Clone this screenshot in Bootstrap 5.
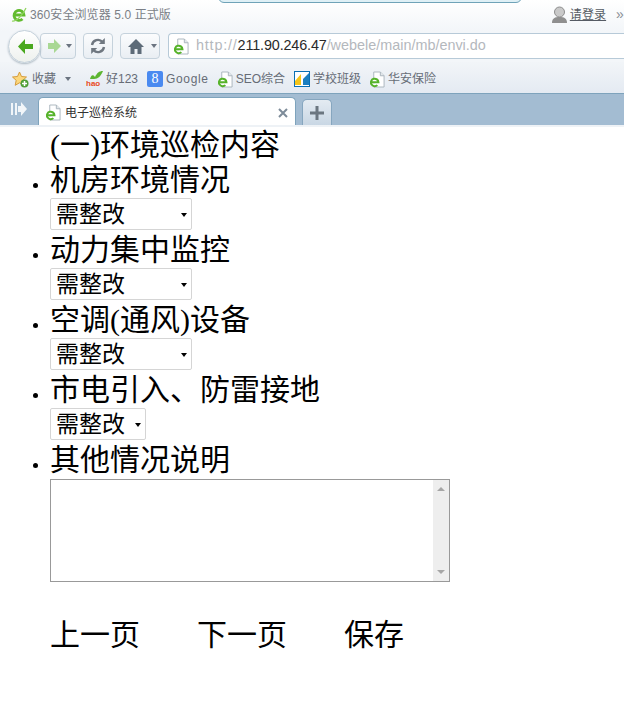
<!DOCTYPE html>
<html lang="zh-CN">

<head>
    <meta charset="UTF-8">
    <title>电子巡检系统</title>
    <link href="https://cdn.jsdelivr.net/npm/bootstrap@5.3.2/dist/css/bootstrap.min.css" rel="stylesheet">
    <style>
        html, body { height: 727px; overflow: hidden; background: #fff; }
        body { color: #000; font-family: "Liberation Serif", "Noto Sans CJK SC", serif; }

        /* browser chrome */
        .chrome { font-family: "Liberation Sans", "Noto Sans CJK SC", sans-serif; font-size: 12px; color: #666c76; position: relative; }
        .title-row { height: 31px; padding: 0 0 2px 11px; background: linear-gradient(#fff, #f3f6f9); gap: 3px; color: #7b7f86; letter-spacing: .1px; }
        .top-notch { position: absolute; left: 218px; top: -4px; width: 304px; height: 7px; background: #dff0f6; border: 1px solid #6fa3b8; border-radius: 0 0 6px 6px; }
        .login-link { color: #555b64; text-decoration: underline; margin-left: 3px; }
        .more-mark { margin: 0 0 0 10px; color: #8a8f96; font-size: 14px; }
        .addr-row { height: 31px; background: #f3f6f9; padding: 0 0 1px 7px; position: relative; }
        .tool-btn { height: 26px; border: 1px solid #c5d2dc; border-radius: 4px; background: linear-gradient(#fbfcfd, #e9eef3); }
        .back-circle { position: absolute; left: 8px; top: -1px; width: 33px; height: 33px; border-radius: 50%; background: linear-gradient(#fff, #eef1ee); border: 1px solid #c3d0da; box-shadow: 0 1px 2px #aab6c0; }
        .forward-btn { width: 36px; margin-left: 33px; padding-left: 7px; gap: 5px; }
        .reload-btn { width: 30px; margin-left: 7px; }
        .home-btn { width: 40px; margin-left: 7px; padding-left: 7px; gap: 7px; }
        .url-box { flex: 1; height: 26px; margin-left: 8px; padding-left: 5px; gap: 7px; background: #fff; border: 1px solid #b7cad8; border-right: 0; border-radius: 4px 0 0 4px; font-size: 14.4px; color: #b4b8bd; }
        .url-scheme { letter-spacing: .8px; }
        .url-host { color: #2a2a2a; letter-spacing: -.15px; }
        .caret-mini { width: 0; height: 0; border: 3px solid transparent; border-top: 4px solid #6b7480; border-bottom: 0; }
        .fav-row { height: 32px; padding: 3px 0 0 12px; background: linear-gradient(#f2f5f8, #e4eaf2); border-bottom: 1px solid #7ea3bc; font-size: 12px; }
        .fav-item { gap: 3px; margin-right: 9px; }
        .fav-caret { margin: 0 6px 0 6px; }
        .g-box { width: 16px; height: 16px; border-radius: 2px; background: #4a8af0; color: #fff; font: 14px/16px "Liberation Serif", serif; text-align: center; }
        .wide-latin { letter-spacing: .65px; }
        .tab-strip { height: 31px; background: #a3bcd2; padding-top: 3px; }
        .strip-side { width: 38px; height: 28px; border-radius: 0 0 6px 0; padding-left: 11px; padding-bottom: 5px; }
        .page-tab { width: 258px; height: 28px; background: #fff; border: 1px solid #7ea3bc; border-bottom: 0; border-radius: 5px 5px 0 0; padding: 2px 7px 0 7px; gap: 4px; color: #333; }
        .plus-tab { width: 30px; height: 26px; margin: 2px 0 0 6px; background: linear-gradient(#e4ebf2, #c9d7e4); border: 1px solid #86a6bf; border-bottom: 0; border-radius: 5px 5px 0 0; }
        .under-strip { height: 2px; background: #eef2f6; }

        /* page */
        .page-body { padding-left: 50px; font-size: 30px; line-height: 35px; }
        .form-list { list-style: disc; margin: 0; padding: 0; }
        .form-list li::marker { font-size: 17.5px; }
        .check-sel { height: 32px; margin: 1px 0 2px; border: 1px solid #d5d5d5; border-radius: 2px; background: #fff; font-size: 23px; line-height: 30px; padding: 1px 4px 0 5px; gap: 8px; white-space: nowrap; }
        .sel-wide { width: 142px; }
        .sel-narrow { width: 96px; }
        .sel-arrow { width: 0; height: 0; border: 3.5px solid transparent; border-top: 4px solid #000; border-bottom: 0; margin-left: auto; }
        .note-box { width: 400px; height: 103px; margin-top: 2px; border: 1px solid #999; }
        .note-bar { width: 16px; margin-left: auto; background: #eee; padding: 7px 0; }
        .bar-up { border: 4px solid transparent; border-bottom: 4px solid #a6a6a6; border-top: 0; }
        .bar-down { border: 4px solid transparent; border-top: 4px solid #a6a6a6; border-bottom: 0; }
        .page-actions { margin-top: 35px; gap: 57px; line-height: 35px; }
    </style>
    <script src="https://cdn.jsdelivr.net/npm/bootstrap@5.3.2/dist/js/bootstrap.bundle.min.js"></script>
</head>

<body>
    <svg width="0" height="0" class="d-none">
        <symbol id="ie-doc" viewBox="0 0 16 18">
            <path d="M4 1h7l4 4v12H4z" fill="#fff" stroke="#a9b4bc"/>
            <path d="M11 1v4h4" fill="#e4e8ec" stroke="#a9b4bc"/>
            <path d="M1.500 12h7.500a4 4 0 1 0-1.200 3" fill="#fff" stroke="#56b32a" stroke-width="2.200"/>
        </symbol>
    </svg>

    <div class="chrome">
        <div class="top-notch"></div>
        <div class="title-row d-flex align-items-center">
            <svg width="16" height="17" viewBox="0 0 16 17">
                <path d="M3 9h10a5 5 0 1 0-1.500 4" fill="#fff" stroke="#62bb2f" stroke-width="2.800"/>
                <path d="M1 15C5 16 12 9 15 2" fill="none" stroke="#8fd45c" stroke-width="1.200"/>
            </svg>
            <span>360安全浏览器 5.0 正式版</span>
            <div class="ms-auto d-flex align-items-center">
                <svg width="15" height="17" viewBox="0 0 15 17">
                    <circle cx="7.500" cy="6" r="5" fill="#c9c9c9" stroke="#8e8e8e"/>
                    <path d="M0 17c0-5 3-6 7.500-6s7.500 1 7.500 6z" fill="#8f8f8f"/>
                </svg>
                <span class="login-link">请登录</span>
                <span class="more-mark">»</span>
            </div>
        </div>

        <div class="addr-row d-flex align-items-center">
            <div class="back-circle d-flex align-items-center justify-content-center">
                <svg width="18" height="17" viewBox="0 0 18 17"><path d="M9 1 2 8.500l7 7.500V11h8V6H9z" fill="#4aa81f"/></svg>
            </div>
            <div class="tool-btn forward-btn d-flex align-items-center">
                <svg width="13" height="14" viewBox="0 0 13 14"><path d="M6 0l7 7-7 7v-4H0V4h6z" fill="#a9d894"/></svg>
                <span class="caret-mini"></span>
            </div>
            <div class="tool-btn reload-btn d-flex align-items-center justify-content-center">
                <svg width="18" height="18" viewBox="0 0 18 18" fill="none" stroke="#6f7780" stroke-width="2.400">
                    <path d="M3 8a6 6 0 0 1 10.500-3"/><path d="M15 10a6 6 0 0 1-10.500 3"/>
                    <path d="M15.800 1v6h-6z" fill="#6f7780" stroke="none"/><path d="M2.200 17v-6h6z" fill="#6f7780" stroke="none"/>
                </svg>
            </div>
            <div class="tool-btn home-btn d-flex align-items-center">
                <svg width="16" height="15" viewBox="0 0 16 15"><path d="M8 0 0 8h2.500v7h4v-5h3v5h4V8H16z" fill="#5d6b78"/></svg>
                <span class="caret-mini"></span>
            </div>
            <div class="url-box d-flex align-items-center">
                <svg width="15" height="17"><use href="#ie-doc"/></svg>
                <span><span class="url-scheme">http://</span><span class="url-host">211.90.246.47</span>/webele/main/mb/envi.do</span>
            </div>
        </div>

        <div class="fav-row d-flex align-items-center">
            <div class="fav-item d-flex align-items-center">
                <svg width="17" height="17" viewBox="0 0 17 17">
                    <path d="M7.500 1l2 4.500 5 .5-3.700 3.300 1 5-4.300-2.500L3.200 14.300l1-5L.5 6l5-.5z" fill="#fcd77c" stroke="#d59b3a"/>
                    <circle cx="12.500" cy="12.500" r="4" fill="#4f9f37"/>
                    <path d="M12.500 10v5M10 12.500h5" stroke="#fff" stroke-width="1.500"/>
                </svg>
                <span>收藏</span>
                <span class="caret-mini fav-caret"></span>
            </div>
            <div class="fav-item d-flex align-items-center">
                <svg width="17" height="16" viewBox="0 0 17 16">
                    <path d="M4 8C5 4 7 3 9 6c2-4 4-6 8-6-2 5-5 8-9 8z" fill="#5cb531"/>
                    <text x="0" y="15" font-family="Liberation Sans" font-size="8" font-weight="700" fill="#e8491c">hao</text>
                </svg>
                <span>好123</span>
            </div>
            <div class="fav-item d-flex align-items-center">
                <div class="g-box">8</div>
                <span class="wide-latin">Google</span>
            </div>
            <div class="fav-item d-flex align-items-center">
                <svg width="15" height="17"><use href="#ie-doc"/></svg>
                <span>SEO综合</span>
            </div>
            <div class="fav-item d-flex align-items-center">
                <svg width="16" height="16" viewBox="0 0 16 16">
                    <rect x=".5" y=".5" width="15" height="15" fill="#fff" stroke="#0b6fb3"/>
                    <path d="M1 10 7 3v11H1z" fill="#f5c518"/><path d="M9 14V8l6-6v12z" fill="#1b7fc0"/>
                </svg>
                <span>学校班级</span>
            </div>
            <div class="fav-item d-flex align-items-center">
                <svg width="15" height="17"><use href="#ie-doc"/></svg>
                <span>华安保险</span>
            </div>
        </div>

        <div class="tab-strip d-flex align-items-start">
            <div class="strip-side d-flex align-items-center">
                <svg width="16" height="14" viewBox="0 0 16 14"><path d="M0 1h2v12H0zM4 1h2v12H4zM7 4h3V0l6 7-6 7v-4H7z" fill="#f2f6f9"/></svg>
            </div>
            <div class="page-tab d-flex align-items-center">
                <svg width="15" height="17"><use href="#ie-doc"/></svg>
                <span>电子巡检系统</span>
                <svg class="ms-auto" width="10" height="10" viewBox="0 0 10 10"><path d="M1 1l8 8M9 1 1 9" stroke="#7d8b99" stroke-width="2"/></svg>
            </div>
            <div class="plus-tab d-flex align-items-center justify-content-center">
                <svg width="14" height="14" viewBox="0 0 14 14"><path d="M7 0v14M0 7h14" stroke="#6b7680" stroke-width="3"/></svg>
            </div>
        </div>
        <div class="under-strip"></div>
    </div>

    <div class="page-body">
        <div>(一)环境巡检内容</div>
        <ul class="form-list">
            <li>机房环境情况
                <div class="check-sel sel-wide d-flex align-items-center"><span>需整改</span><span class="sel-arrow"></span></div>
            </li>
            <li>动力集中监控
                <div class="check-sel sel-wide d-flex align-items-center"><span>需整改</span><span class="sel-arrow"></span></div>
            </li>
            <li>空调(通风)设备
                <div class="check-sel sel-wide d-flex align-items-center"><span>需整改</span><span class="sel-arrow"></span></div>
            </li>
            <li>市电引入、防雷接地
                <div class="check-sel sel-narrow d-flex align-items-center"><span>需整改</span><span class="sel-arrow"></span></div>
            </li>
            <li>其他情况说明
                <div class="note-box d-flex">
                    <div class="note-bar d-flex flex-column align-items-center justify-content-between">
                        <span class="bar-up"></span><span class="bar-down"></span>
                    </div>
                </div>
            </li>
        </ul>
        <div class="page-actions d-flex">
            <span>上一页</span><span>下一页</span><span>保存</span>
        </div>
    </div>
</body>

</html>
